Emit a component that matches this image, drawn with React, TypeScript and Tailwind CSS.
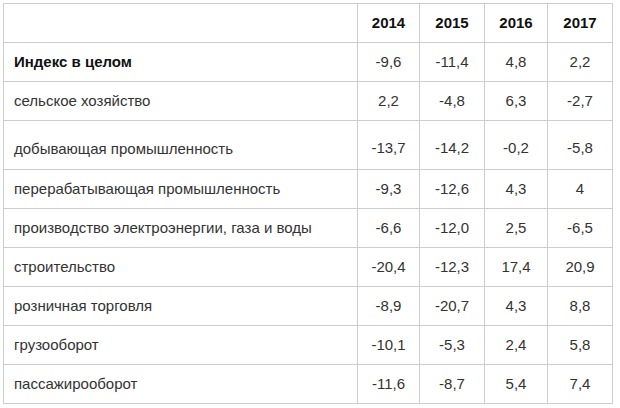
const years = ['2014', '2015', '2016', '2017'];

const rows: { label: string; values: string[]; bold?: boolean; tall?: boolean }[] = [
  { label: 'Индекс в целом', values: ['-9,6', '-11,4', '4,8', '2,2'], bold: true },
  { label: 'сельское хозяйство', values: ['2,2', '-4,8', '6,3', '-2,7'] },
  { label: 'добывающая промышленность', values: ['-13,7', '-14,2', '-0,2', '-5,8'], tall: true },
  { label: 'перерабатывающая промышленность', values: ['-9,3', '-12,6', '4,3', '4'] },
  { label: 'производство электроэнергии, газа и воды', values: ['-6,6', '-12,0', '2,5', '-6,5'] },
  { label: 'строительство', values: ['-20,4', '-12,3', '17,4', '20,9'] },
  { label: 'розничная торговля', values: ['-8,9', '-20,7', '4,3', '8,8'] },
  { label: 'грузооборот', values: ['-10,1', '-5,3', '2,4', '5,8'] },
  { label: 'пассажирооборот', values: ['-11,6', '-8,7', '5,4', '7,4'] },
];

const widths = ['w-[354px]', 'w-[62px]', 'w-[65px]', 'w-[63px]', 'w-[65px]'];

export default function App() {
  return (
    <div className="w-[620px] h-[408px] bg-white pt-[3px] pl-[3px] font-['Liberation_Sans',Arial,sans-serif] text-[15px] text-[#333]">
      <table className="border-collapse table-fixed w-[610px]">
        <colgroup>
          {widths.map((w, i) => (
            <col key={i} className={w} />
          ))}
        </colgroup>
        <thead>
          <tr className="h-[39px]">
            <th className="border border-[#ccc]"></th>
            {years.map((y) => (
              <th key={y} className="border border-[#ccc] text-center font-bold text-[#111] align-middle">
                {y}
              </th>
            ))}
          </tr>
        </thead>
        <tbody>
          {rows.map((r) => (
            <tr key={r.label} className={r.tall ? 'h-[49px]' : 'h-[39px]'}>
              <td
                className={`border border-[#ccc] pl-[10px] ${r.tall ? 'align-bottom pb-[9px]' : 'align-middle'} ${
                  r.bold ? 'font-bold text-[#111]' : ''
                }`}
              >
                {r.label}
              </td>
              {r.values.map((v, i) => (
                <td
                  key={i}
                  className={`border border-[#ccc] text-center ${r.tall ? 'align-bottom pb-[10px]' : 'align-middle'}`}
                >
                  {v}
                </td>
              ))}
            </tr>
          ))}
        </tbody>
      </table>
    </div>
  );
}
